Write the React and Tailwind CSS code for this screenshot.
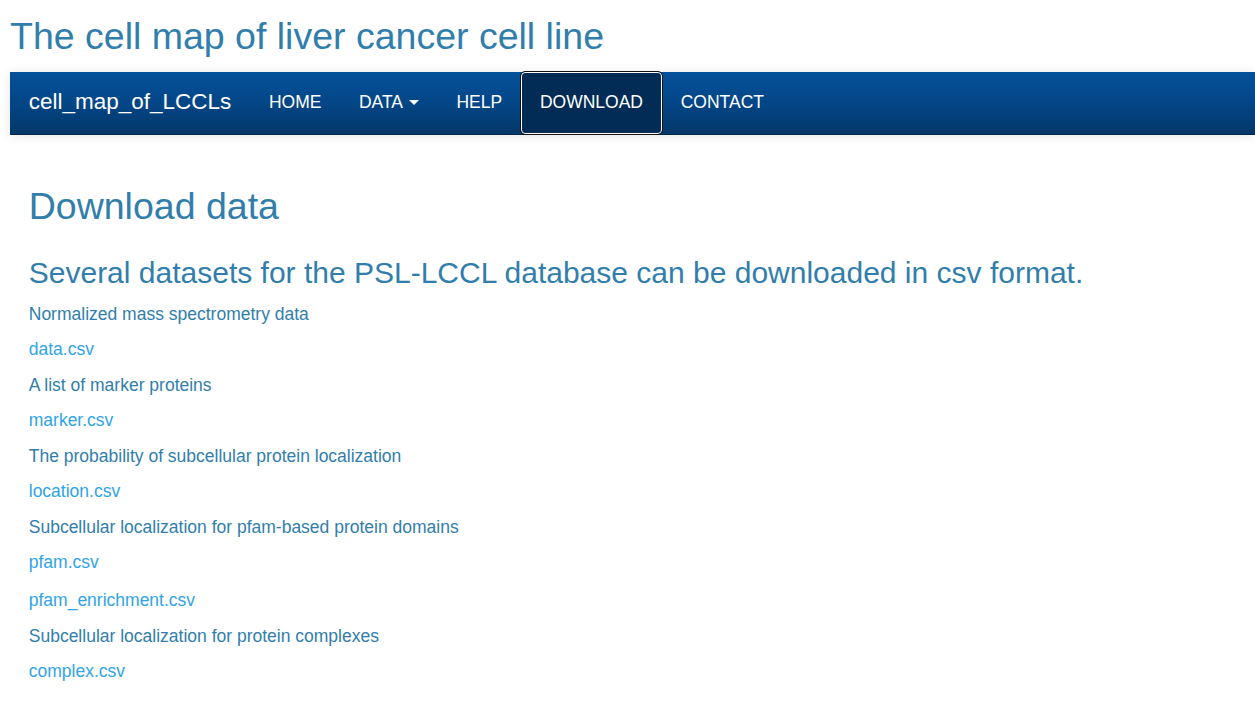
const files = [
  { desc: "Normalized mass spectrometry data", links: ["data.csv"] },
  { desc: "A list of marker proteins", links: ["marker.csv"] },
  { desc: "The probability of subcellular protein localization", links: ["location.csv"] },
  { desc: "Subcellular localization for pfam-based protein domains", links: ["pfam.csv", "pfam_enrichment.csv"] },
  { desc: "Subcellular localization for protein complexes", links: ["complex.csv"] },
];

const NavLink = ({ children, active }) => (
  <a
    href="#"
    className={
      active
        ? "flex items-center h-full px-[18px] pb-[2px] text-white bg-[#022c55] rounded-[4px] border border-white outline outline-[#101010]"
        : "flex items-center h-full px-[18.75px] pb-[2px] text-white"
    }
  >
    {children}
  </a>
);

export default function App() {
  return (
    <div className="min-h-screen bg-white pl-[10px] font-['Liberation_Sans',Arial,sans-serif] text-[17.5px] text-[#317eac]">
      <h2 className="mt-[16px] mb-[15px] text-[37.5px] leading-[1.1]">
        The cell map of liver cancer cell line
      </h2>

      <nav className="h-[63px] flex items-stretch bg-gradient-to-b from-[#04519b] via-[#044687] to-[#033769] border-b border-[#02264a] shadow-[0_1px_10px_rgba(0,0,0,0.1)]">
        <a href="#" className="flex items-center px-[18.75px] pb-[2px] text-[22.5px] text-white">
          cell_map_of_LCCLs
        </a>
        <div className="flex items-stretch">
          <NavLink>HOME</NavLink>
          <NavLink>
            DATA
            <span className="ml-[6px] inline-block w-0 h-0 border-x-[5px] border-x-transparent border-t-[5px] border-t-white" />
          </NavLink>
          <NavLink>HELP</NavLink>
          <NavLink active>DOWNLOAD</NavLink>
          <NavLink>CONTACT</NavLink>
        </div>
      </nav>

      <div className="px-[18.75px]">
        <h2 className="mt-[51px] text-[37.5px] leading-[1.1]">Download data</h2>
        <h3 className="mt-[28px] mb-[13px] text-[30px] leading-[1.1]">
          Several datasets for the PSL-LCCL database can be downloaded in csv format.
        </h3>
        {files.map((f) => (
          <div key={f.desc}>
            <p className="leading-[25px] mb-[10.5px]">{f.desc}</p>
            {f.links.map((l, i) => (
              <p
                key={l}
                className={
                  i < f.links.length - 1
                    ? "leading-[25px] mb-[13px]"
                    : "leading-[25px] mb-[10.5px]"
                }
              >
                <a href="#" className="text-[#2fa4e7]">
                  {l}
                </a>
              </p>
            ))}
          </div>
        ))}
      </div>
    </div>
  );
}
